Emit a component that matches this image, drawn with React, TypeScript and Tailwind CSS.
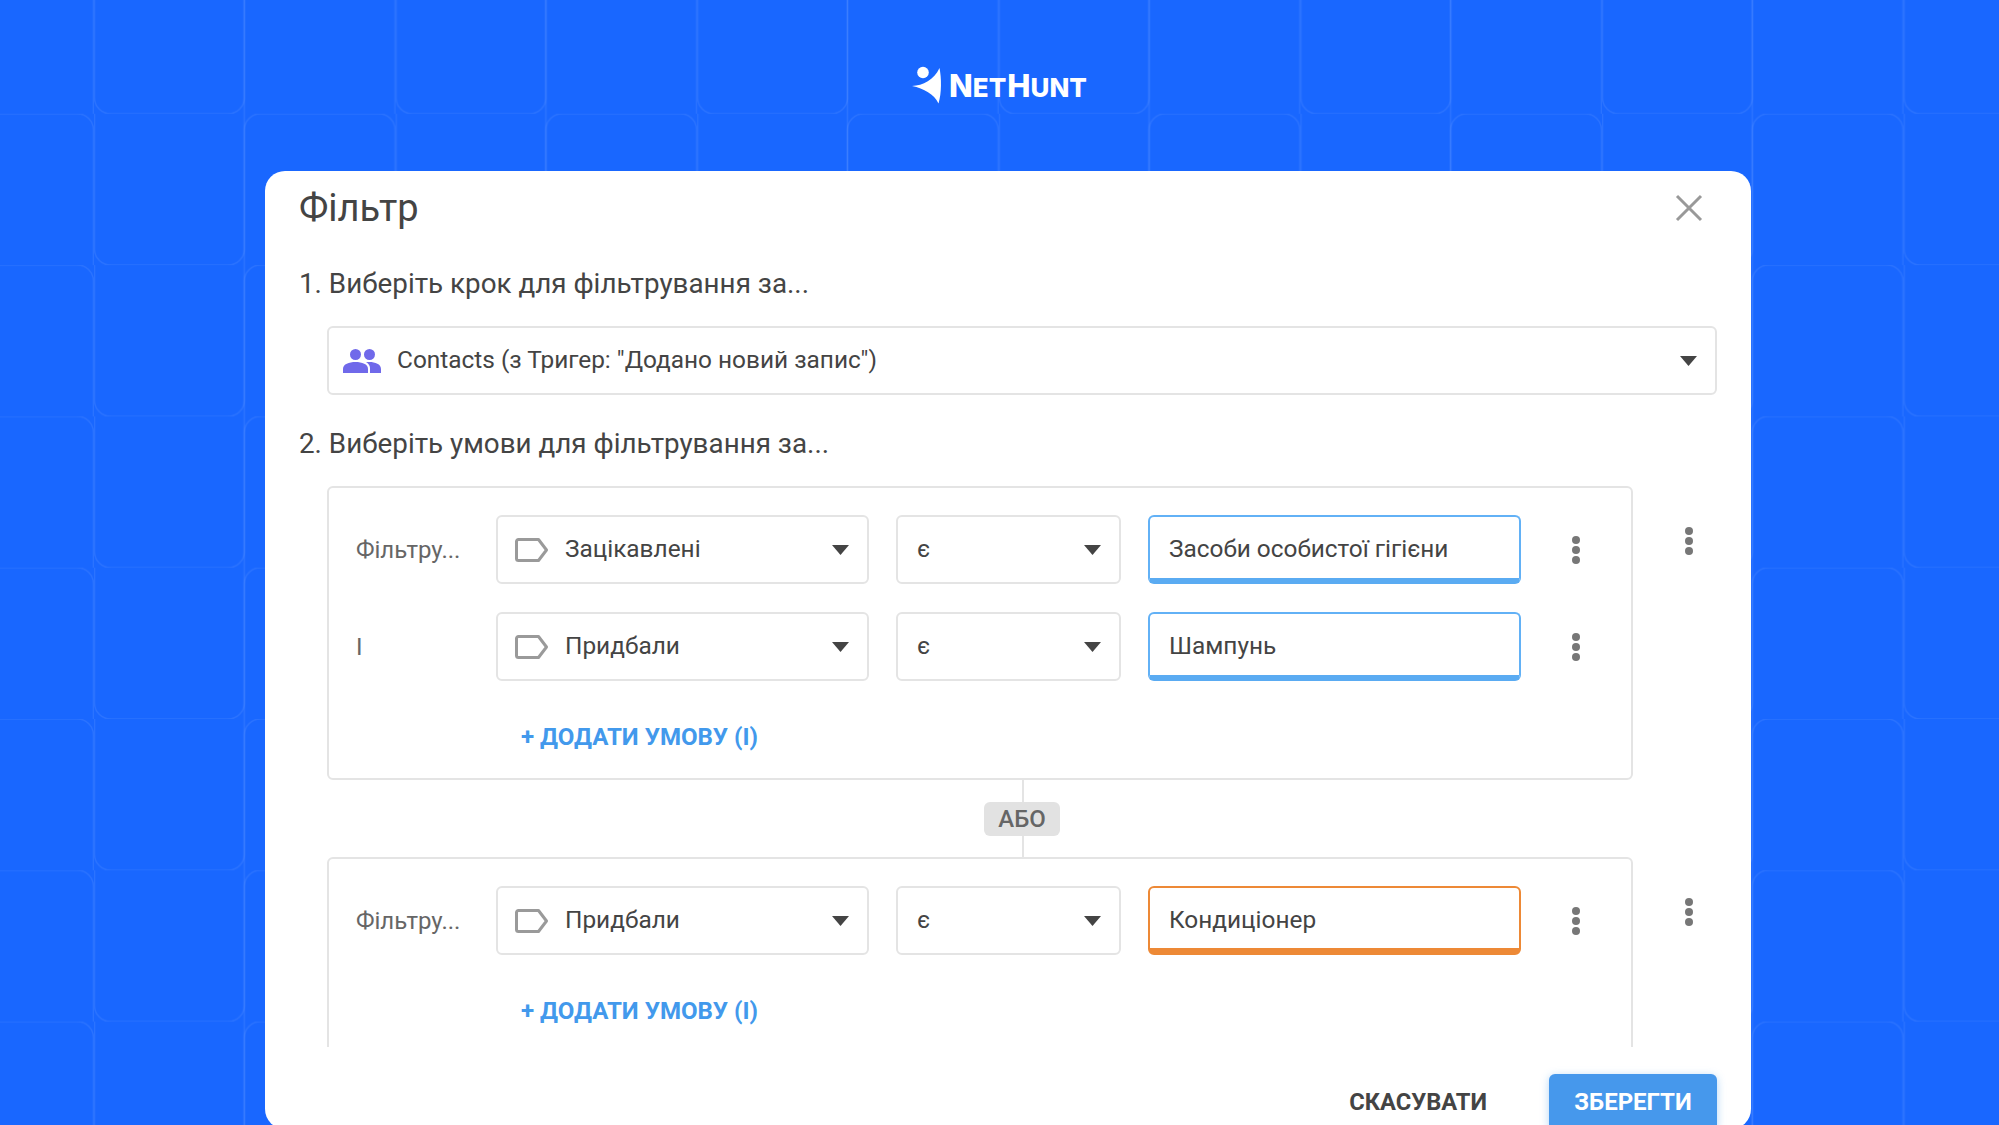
const Arrow = () => (
  <svg width="17" height="10" viewBox="0 0 17 10" className="shrink-0">
    <path d="M0 0h17L8.5 10z" fill="#444444" />
  </svg>
);

const Kebab = () => (
  <svg width="10" height="30" viewBox="0 0 10 30" className="shrink-0">
    <circle cx="5" cy="5" r="4" fill="#777777" />
    <circle cx="5" cy="15" r="4" fill="#777777" />
    <circle cx="5" cy="25" r="4" fill="#777777" />
  </svg>
);

const Tag = () => (
  <svg width="34" height="24" viewBox="0 0 34 24" className="shrink-0">
    <path d="M3.5 1.5H23.5L31.5 12L23.500 22.5H3.5a2 2 0 0 1-2-2V3.5a2 2 0 0 1 2-2z" fill="none" stroke="#9a9a9a" strokeWidth="3" strokeLinejoin="round" />
  </svg>
);

const Row = ({ label, tag, value, accent }: { label: string; tag: string; value: string; accent: "blue" | "orange" }) => (
  <div className="flex h-[69px] items-center">
    <div className="w-[140px] shrink-0 text-[24px] text-[#666666]">{label}</div>
    <div className="flex h-full w-[373px] shrink-0 items-center rounded-[6px] border-2 border-[#e4e4e4] pl-[17px] pr-[18px]">
      <Tag />
      <span className="ml-[16px] flex-1 text-[24.4px] text-[#444444]">{tag}</span>
      <Arrow />
    </div>
    <div className="ml-[27px] flex h-full w-[225px] shrink-0 items-center justify-between rounded-[6px] border-2 border-[#e4e4e4] pl-[19px] pr-[18px]">
      <span className="text-[24.4px] text-[#444444]">є</span>
      <Arrow />
    </div>
    {accent === "blue" ? (
      <div className="ml-[27px] flex h-full w-[373px] shrink-0 items-center rounded-[6px] border-2 border-b-[6px] border-[#62b1f6] border-b-[#5aabf2] pl-[19px] pt-[4px] text-[24.4px] text-[#444444]">
        {value}
      </div>
    ) : (
      <div className="ml-[27px] flex h-full w-[373px] shrink-0 items-center rounded-[6px] border-2 border-b-[7px] border-[#ed8936] pl-[19px] pt-[5px] text-[24.4px] text-[#444444]">
        {value}
      </div>
    )}
    <div className="ml-[50px] flex w-[10px] justify-center">
      <Kebab />
    </div>
  </div>
);

const AddCondition = () => (
  <div className="ml-[165px] text-[24.1px] font-bold leading-[30px] text-[#4299ec]">+ ДОДАТИ УМОВУ (І)</div>
);

export default function App() {
  return (
    <div className="relative h-[1125px] w-[1999px] overflow-hidden bg-[#1967ff] font-['Roboto',sans-serif]">
      <svg className="absolute inset-0" width="1999" height="1125" aria-hidden="true">
        <defs>
          <pattern id="tiles" x="94" y="-37.5" width="301.6" height="151.3" patternUnits="userSpaceOnUse">
            <path d="M0.5 0V135.3a16 16 0 0 0 16 16H134.3a16 16 0 0 0 16-16V0" fill="none" stroke="#ffffff" strokeOpacity="0.08" strokeWidth="1.5" />
            <path d="M150.300 151.3V16a16 16 0 0 1 16-16H285.100a16 16 0 0 1 16 16V151.3" fill="none" stroke="#ffffff" strokeOpacity="0.08" strokeWidth="1.5" />
          </pattern>
        </defs>
        <rect width="1999" height="1125" fill="url(#tiles)" />
      </svg>

      <div className="relative flex h-[171px] items-start justify-center pt-[66px]">
        <svg width="30" height="38" viewBox="0 0 30 38">
          <circle cx="11" cy="6.5" r="5.8" fill="#ffffff" />
          <path d="M27.5 2C29.5 12 29.8 27 26.5 37.5C22 28 12 22.5 0 20C11 19.5 22 14 27.5 2Z" fill="#ffffff" />
        </svg>
        <div className="ml-[7px] flex items-baseline pt-[5px] font-['Inter',sans-serif] font-extrabold leading-[30px] text-white">
          <span className="text-[31px]">N</span>
          <span className="text-[26px]">ET</span>
          <span className="ml-[1px] text-[31px]">H</span>
          <span className="text-[26px]">UNT</span>
        </div>
      </div>

      <div className="relative ml-[265px] flex h-[958px] w-[1486px] flex-col rounded-[20px] bg-white pl-[34px] pr-[34px] text-[#444444]">
        <div className="flex h-[73px] shrink-0 items-center justify-between">
          <h1 className="text-[38px] font-normal leading-[44px]">Фільтр</h1>
          <svg width="28" height="28" viewBox="0 0 28 28" className="mr-[14px]">
            <path d="M2 2L26 26M26 2L2 26" stroke="#999999" strokeWidth="3" />
          </svg>
        </div>

        <div className="flex h-[1px] min-h-0 grow flex-col overflow-hidden">
          <div className="mt-[23px] h-[34px] shrink-0 text-[27.8px] leading-[34px]">1. Виберіть крок для фільтрування за...</div>
          <div className="ml-[28px] mt-[25px] flex h-[69px] shrink-0 items-center rounded-[6px] border-2 border-[#e4e4e4] pl-[14px] pr-[18px]">
            <svg width="38" height="24" viewBox="0 0 38 24" className="shrink-0">
              <circle cx="12.5" cy="5.5" r="5.5" fill="#7069ea" />
              <circle cx="26.5" cy="5.5" r="5.5" fill="#7069ea" />
              <path d="M0 24V20C0 15 6 13 12.5 13S25 15 25 20V24Z" fill="#7069ea" />
              <path d="M27 24V19C27 16.500 25.500 14.500 23 13.200C24.500 13 25.500 13 26.500 13C32 13 38 15 38 20V24Z" fill="#7069ea" />
            </svg>
            <span className="ml-[16px] flex-1 text-[24.4px]">Contacts (з Тригер: "Додано новий запис")</span>
            <Arrow />
          </div>
          <div className="mt-[32px] h-[34px] shrink-0 text-[27.8px] leading-[34px]">2. Виберіть умови для фільтрування за...</div>

          <div className="mt-[25px] flex shrink-0 items-start">
            <div className="ml-[28px] h-[294px] w-[1306px] shrink-0 rounded-[6px] border-2 border-[#e4e4e4] pl-[27px] pt-[27px]">
              <Row label="Фільтру..." tag="Зацікавлені" value="Засоби особистої гігієни" accent="blue" />
              <div className="mt-[28px]">
                <Row label="І" tag="Придбали" value="Шампунь" accent="blue" />
              </div>
              <div className="mt-[41px]">
                <AddCondition />
              </div>
            </div>
            <div className="ml-[51px] mt-[40px]">
              <Kebab />
            </div>
          </div>

          <div className="relative ml-[28px] flex h-[77px] w-[1306px] shrink-0 items-center justify-center">
            <div className="absolute left-[695px] top-0 h-full w-[2px] bg-[#e4e4e4]" />
            <div className="relative ml-[84px] flex h-[34px] w-[76px] items-center justify-center rounded-[6px] bg-[#e2e2e2] text-[24px] font-medium text-[#666666]">
              АБО
            </div>
          </div>

          <div className="flex shrink-0 items-start">
            <div className="ml-[28px] h-[260px] w-[1306px] shrink-0 rounded-[6px] border-2 border-[#e4e4e4] pl-[27px] pt-[27px]">
              <Row label="Фільтру..." tag="Придбали" value="Кондиціонер" accent="orange" />
              <div className="mt-[41px]">
                <AddCondition />
              </div>
            </div>
            <div className="ml-[51px] mt-[40px]">
              <Kebab />
            </div>
          </div>
        </div>

        <div className="flex h-[82px] shrink-0 items-start justify-end pt-[27px]">
          <div className="mr-[62px] mt-[13px] text-[23.7px] font-bold leading-[30px] text-[#444444]">СКАСУВАТИ</div>
          <div className="flex h-[55px] w-[168px] items-start justify-center rounded-t-[6px] bg-[#4698ec] pt-[13px] text-[24px] font-bold leading-[30px] text-white shadow-[0_2px_8px_rgba(66,153,236,0.4)]">
            ЗБЕРЕГТИ
          </div>
        </div>
      </div>
    </div>
  );
}
